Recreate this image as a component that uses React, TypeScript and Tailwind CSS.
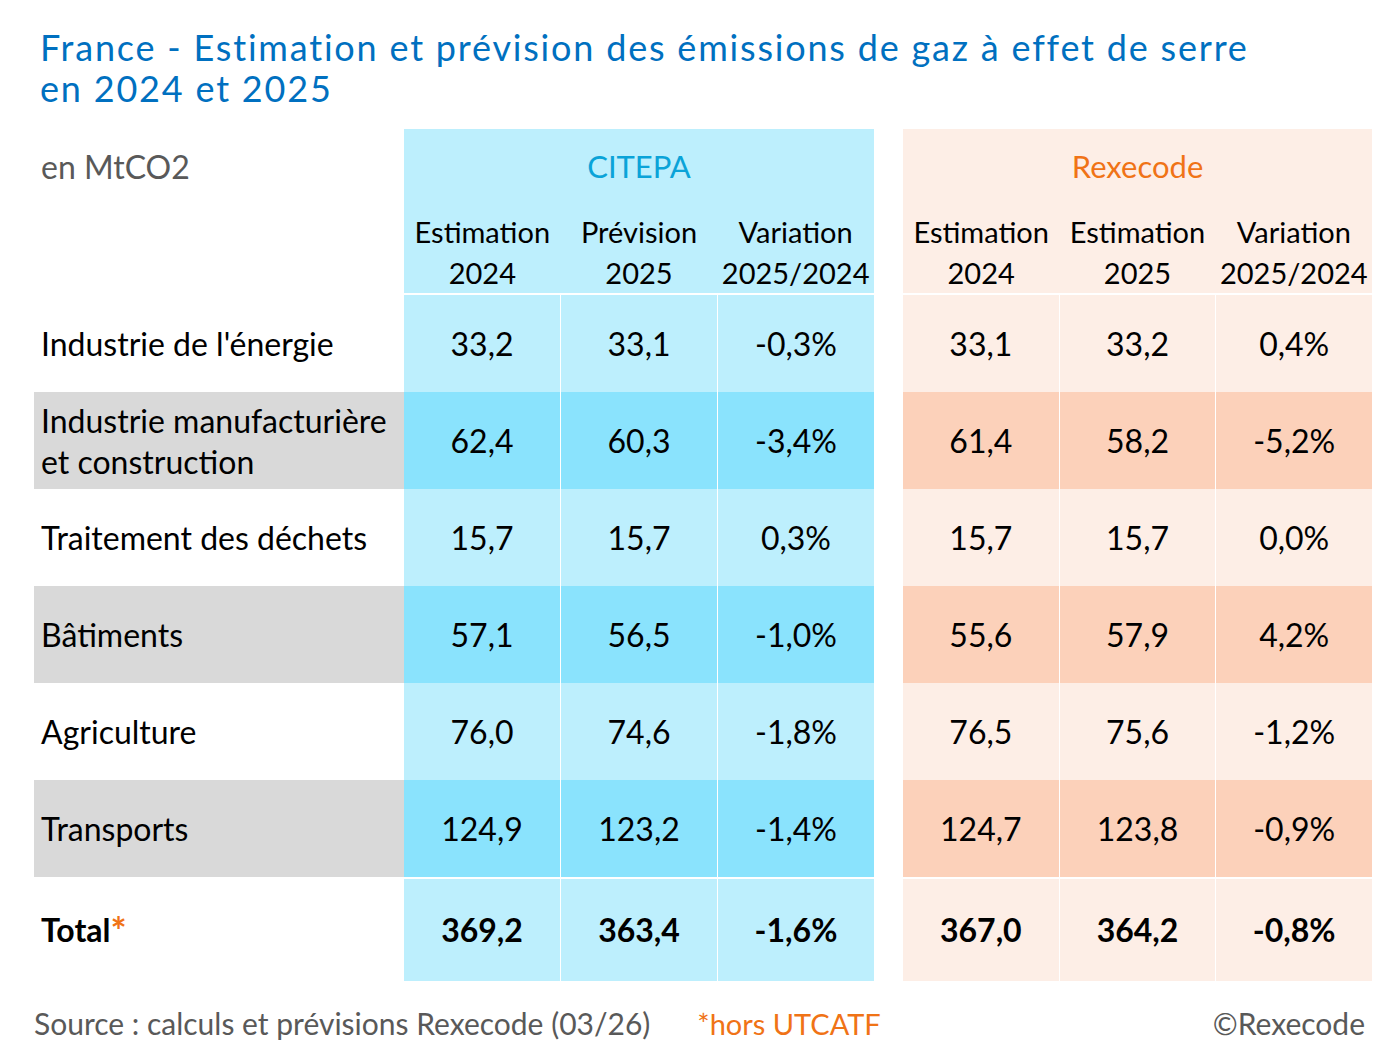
import React from "react";

const rows = [
  { label: "Industrie de l'énergie", c: ["33,2", "33,1", "-0,3%"], r: ["33,1", "33,2", "0,4%"], dark: false },
  { label: "Industrie manufacturière et construction", c: ["62,4", "60,3", "-3,4%"], r: ["61,4", "58,2", "-5,2%"], dark: true },
  { label: "Traitement des déchets", c: ["15,7", "15,7", "0,3%"], r: ["15,7", "15,7", "0,0%"], dark: false },
  { label: "Bâtiments", c: ["57,1", "56,5", "-1,0%"], r: ["55,6", "57,9", "4,2%"], dark: true },
  { label: "Agriculture", c: ["76,0", "74,6", "-1,8%"], r: ["76,5", "75,6", "-1,2%"], dark: false },
  { label: "Transports", c: ["124,9", "123,2", "-1,4%"], r: ["124,7", "123,8", "-0,9%"], dark: true },
];

function Cells({ values, bg, bold }: { values: string[]; bg: string; bold?: boolean }) {
  return (
    <div className="grid grid-cols-3 gap-px bg-white">
      {values.map((v, i) => (
        <div
          key={i}
          className={`${bg} flex items-center justify-center text-[32px] ${bold ? "font-bold" : ""}`}
        >
          {v}
        </div>
      ))}
    </div>
  );
}

function HeaderCols({ labels }: { labels: [string, string][] }) {
  return (
    <div className="grid grid-cols-3">
      {labels.map(([a, b], i) => (
        <div key={i} className="flex flex-col items-center text-[29px] leading-[41px]">
          <span>{a}</span>
          <span>{b}</span>
        </div>
      ))}
    </div>
  );
}

export default function App() {
  return (
    <div className="w-[1400px] h-[1050px] bg-white text-black font-['Lato',sans-serif] relative">
      <h1 className="pl-[40px] pt-[27px] text-[36px] leading-[41px] tracking-[0.05em] text-[#0070c0] font-normal">
        France - Estimation et prévision des émissions de gaz à effet de serre
        <br />
        en 2024 et 2025
      </h1>

      <div className="mt-[20px] ml-[34px] grid grid-cols-[370px_470px_29px_469px]">
        {/* header */}
        <div className="h-[164px] pl-[7px] pt-[14px] text-[32px] text-[#595959]">en MtCO2</div>
        <div className="h-[164px] bg-[#bdeffd] flex flex-col justify-between">
          <div className="text-center pt-[14px] text-[31px] text-[#0aa3d8]">CITEPA</div>
          <HeaderCols labels={[["Estimation", "2024"], ["Prévision", "2025"], ["Variation", "2025/2024"]]} />
        </div>
        <div />
        <div className="h-[164px] bg-[#fdeee6] flex flex-col justify-between">
          <div className="text-center pt-[14px] text-[31px] text-[#f07316]">Rexecode</div>
          <HeaderCols labels={[["Estimation", "2024"], ["Estimation", "2025"], ["Variation", "2025/2024"]]} />
        </div>

        {/* separator */}
        <div className="h-[2px]" />
        <div className="h-[2px]" />
        <div className="h-[2px]" />
        <div className="h-[2px]" />

        {rows.map((row, i) => (
          <React.Fragment key={i}>
            <div
              className={`h-[97px] flex items-center pl-[7px] pr-[4px] text-[32px] leading-[41px] ${
                row.dark ? "bg-[#d9d9d9]" : ""
              }`}
            >
              {row.label}
            </div>
            <Cells values={row.c} bg={row.dark ? "bg-[#8ae3fd]" : "bg-[#bdeffd]"} />
            <div />
            <Cells values={row.r} bg={row.dark ? "bg-[#fcd1ba]" : "bg-[#fdeee6]"} />
          </React.Fragment>
        ))}

        <div className="h-[2px]" />
        <div className="h-[2px]" />
        <div className="h-[2px]" />
        <div className="h-[2px]" />

        <div className="h-[102px] flex items-center pl-[7px] text-[32px] font-bold">
          Total<span className="text-[38px] leading-none text-[#f07316]">*</span>
        </div>
        <Cells values={["369,2", "363,4", "-1,6%"]} bg="bg-[#bdeffd]" bold />
        <div />
        <Cells values={["367,0", "364,2", "-0,8%"]} bg="bg-[#fdeee6]" bold />
      </div>

      <div className="mt-[20px] ml-[34px] mr-[35px] flex items-baseline text-[30px] text-[#595959]">
        <span>Source : calculs et prévisions Rexecode (03/26)</span>
        <span className="ml-[47px] text-[29px] text-[#f07316]">*hors UTCATF</span>
        <span className="ml-auto">©Rexecode</span>
      </div>
    </div>
  );
}
